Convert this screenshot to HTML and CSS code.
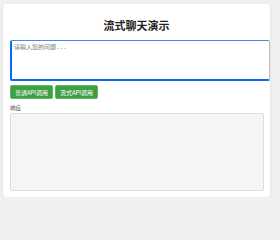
FILE: index.html
```html
<!DOCTYPE html>
<html lang="zh-CN">
<head>
  <meta charset="UTF-8" />
  <meta name="viewport" content="width=device-width, initial-scale=1" />
  <title>流式聊天演示</title>
  <link rel="stylesheet" href="styles.css">
</head>
<body>

<div class="container">
  <h1>流式聊天演示</h1>

  <textarea class="prompt" id="prompt" placeholder="请输入您的问题..."></textarea>

  <div class="actions">
    <button class="btn" id="normalBtn">普通API调用</button>
    <button class="btn" id="streamBtn">流式API调用</button>
  </div>

  <div class="label">响应</div>
  <div class="response" id="response"></div>
</div>

</body>
</html>
```

FILE: styles.css
```css
body {
  font-family: "Noto Sans CJK SC", "Noto Sans", Arial, sans-serif;
  margin: 0;
  padding: 4px 10px 0 3px;
  background: #f0f0f0;
  color: #333;
}
.container {
  background: #fff;
  border-radius: 3px;
  box-shadow: 0 1px 3px rgba(0, 0, 0, 0.1);
  padding: 14px 7px 6px;
}
h1 {
  font-size: 11px;
  line-height: 14px;
  margin: 0 0 8px;
  text-align: center;
  color: #222;
}
.prompt {
  display: block;
  box-sizing: border-box;
  width: 260px;
  height: 41px;
  margin: 0 0 4px;
  padding: 2px 2px;
  border: 2px solid #0a6af5;
  border-top: 1px solid #3b8ef5;
  border-right: 1px solid #c8bcb2;
  border-radius: 2px;
  font-family: "DejaVu Sans Mono", "Noto Sans CJK SC", monospace;
  font-size: 6px;
  line-height: 7px;
  resize: none;
  outline: none;
  background: #fff;
}
.prompt::placeholder {
  color: #777;
}
.actions {
  display: flex;
  gap: 2px;
}
.btn {
  width: 43px;
  height: 14px;
  padding: 0;
  border: 1px solid #5cb860;
  border-radius: 2px;
  background: #3f9f44;
  color: #fff;
  font-family: inherit;
  font-size: 6px;
  cursor: pointer;
}
.label {
  margin-top: 5px;
  font-size: 5.5px;
  line-height: 8px;
  color: #444;
}
.response {
  box-sizing: border-box;
  width: 254px;
  height: 78px;
  margin-top: 1px;
  background: #f5f5f5;
  border: 1px solid #ddd;
  border-radius: 2px;
}
```
